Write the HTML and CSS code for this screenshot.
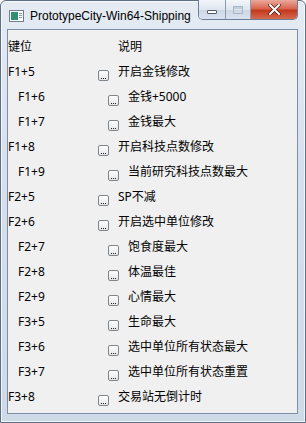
FILE: index.html
```html
<!DOCTYPE html>
<html lang="zh-CN">
<head>
    <meta charset="UTF-8">
    <title>PrototypeCity-Win64-Shipping</title>
    <link rel="stylesheet" href="styles.css">
</head>
<body>
    <div class="window">
        <div class="titlebar">
            <svg class="appicon" width="15" height="12" viewBox="0 0 15 12">
                <rect x="0.5" y="0.5" width="14" height="11" fill="#fff" stroke="#6f7f8f"/>
                <rect x="2" y="2" width="7" height="8" fill="#2f8f6f"/>
                <rect x="10" y="3" width="3" height="1" fill="#8899aa"/>
                <rect x="10" y="5" width="3" height="1" fill="#8899aa"/>
                <rect x="10" y="7" width="3" height="1" fill="#8899aa"/>
            </svg>
            <span class="title">PrototypeCity-Win64-Shipping</span>
            <div class="caption">
                <div class="capbtn min"><span class="minbar"></span></div>
                <div class="capbtn max"><span class="maxbox"></span></div>
                <div class="capbtn close">
                    <svg width="13" height="11" viewBox="0 0 13 11">
                        <path d="M2 1 L11 10 M11 1 L2 10" stroke="#4a1a14" stroke-width="3.4" stroke-linecap="round"/>
                        <path d="M2 1 L11 10 M11 1 L2 10" stroke="#fff" stroke-width="2" stroke-linecap="round"/>
                    </svg>
                </div>
            </div>
        </div>
        <div class="client">
            <div class="row head">
                <span class="key">键位</span>
                <span class="desc">说明</span>
            </div>
            <div class="row"><span class="key">F1+5</span><span class="dots"></span><span class="desc">开启金钱修改</span></div>
            <div class="row sub"><span class="key">F1+6</span><span class="dots"></span><span class="desc">金钱+5000</span></div>
            <div class="row sub"><span class="key">F1+7</span><span class="dots"></span><span class="desc">金钱最大</span></div>
            <div class="row"><span class="key">F1+8</span><span class="dots"></span><span class="desc">开启科技点数修改</span></div>
            <div class="row sub"><span class="key">F1+9</span><span class="dots"></span><span class="desc">当前研究科技点数最大</span></div>
            <div class="row"><span class="key">F2+5</span><span class="dots"></span><span class="desc">SP不减</span></div>
            <div class="row"><span class="key">F2+6</span><span class="dots"></span><span class="desc">开启选中单位修改</span></div>
            <div class="row sub"><span class="key">F2+7</span><span class="dots"></span><span class="desc">饱食度最大</span></div>
            <div class="row sub"><span class="key">F2+8</span><span class="dots"></span><span class="desc">体温最佳</span></div>
            <div class="row sub"><span class="key">F2+9</span><span class="dots"></span><span class="desc">心情最大</span></div>
            <div class="row sub"><span class="key">F3+5</span><span class="dots"></span><span class="desc">生命最大</span></div>
            <div class="row sub"><span class="key">F3+6</span><span class="dots"></span><span class="desc">选中单位所有状态最大</span></div>
            <div class="row sub"><span class="key">F3+7</span><span class="dots"></span><span class="desc">选中单位所有状态重置</span></div>
            <div class="row"><span class="key">F3+8</span><span class="dots"></span><span class="desc">交易站无倒计时</span></div>
        </div>
    </div>
</body>
</html>
```

FILE: styles.css
```css
*{
    margin: 0;
    padding: 0;
    box-sizing: border-box;
}
body{
    width: 306px;
    height: 423px;
    background: #fff;
    font-family: "Noto Sans", "Noto Sans CJK SC", sans-serif;
    font-size: 12px;
    color: #000;
    overflow: hidden;
}
.window{
    width: 306px;
    height: 423px;
    display: flex;
    flex-direction: column;
    border: 1px solid #5d6f86;
    border-radius: 6px 6px 0 0;
    background: linear-gradient(180deg, #e4ebf3 0%, #d6e0ec 40%, #cfdae8 100%);
    box-shadow: inset 0 0 0 1px rgba(255,255,255,0.7);
}
.titlebar{
    height: 27px;
    display: flex;
    align-items: flex-start;
    padding-left: 8px;
}
.appicon{
    flex: none;
    margin-top: 9px;
}
.title{
    flex: none;
    margin-left: 6px;
    margin-top: 7px;
    line-height: 17px;
    white-space: nowrap;
    font-family: "Liberation Sans", "Noto Sans", sans-serif;
    font-size: 12px;
    color: #000;
}
.caption{
    flex: none;
    margin-left: auto;
    margin-right: 7px;
    margin-top: -1px;
    display: flex;
    height: 20px;
    border: 1px solid #6e7f95;
    border-top: none;
    border-radius: 0 0 5px 5px;
    overflow: hidden;
}
.capbtn{
    height: 19px;
    display: flex;
    align-items: center;
    justify-content: center;
    background: linear-gradient(180deg, #f3f6fa 0%, #dfe6ef 50%, #cdd7e4 51%, #d9e2ee 100%);
}
.min{
    width: 27px;
    border-right: 1px solid #8a9ab0;
}
.max{
    width: 25px;
    border-right: 1px solid #8a9ab0;
}
.close{
    width: 46px;
    background: linear-gradient(180deg, #e9a99c 0%, #d9664f 45%, #c4391f 55%, #d46a4e 100%);
}
.minbar{
    width: 10px;
    height: 4px;
    margin-top: 5px;
    background: #fff;
    border: 1px solid #4d5b6b;
    border-radius: 1px;
}
.maxbox{
    width: 10px;
    height: 8px;
    border: 1px solid #a9b7c8;
    box-shadow: inset 0 2px 0 #c2ceda;
}
.client{
    flex: 1;
    margin: 1px 7px 8px 6px;
    background: #f0f0f0;
    border: 1px solid #7d8fa6;
    padding-top: 4px;
    display: flex;
    flex-direction: column;
}
.row{
    display: flex;
    align-items: flex-start;
    height: 25px;
    line-height: 25px;
    white-space: nowrap;
}
.row .key{
    flex: none;
    width: 90px;
}
.row.sub{
    padding-left: 10px;
}
.head .key{
    width: 110px;
}
.dots{
    flex: none;
    width: 11px;
    height: 11px;
    margin-top: 11px;
    margin-right: 9px;
    border: 1px solid #7f858c;
    border-radius: 2px;
    background: linear-gradient(180deg, #ffffff 0%, #e6e6e6 100%);
    position: relative;
}
.dots::after{
    content: "";
    position: absolute;
    left: 2px;
    bottom: 1px;
    width: 1px;
    height: 1px;
    background: #222;
    box-shadow: 2px 0 0 #222, 4px 0 0 #222;
}
```
